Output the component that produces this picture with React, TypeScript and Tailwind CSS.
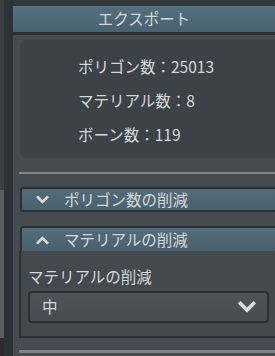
import React from "react";

const Chevron = ({ up = false, className = "" }: { up?: boolean; className?: string }) => (
  <svg viewBox="0 0 14 10" className={className} fill="none">
    <path
      d={up ? "M2 8 L7 3 L12 8" : "M2 2 L7 7 L12 2"}
      stroke="#d6dadc"
      strokeWidth="2.8"
      strokeLinecap="square"
      strokeLinejoin="miter"
    />
  </svg>
);

export default function App() {
  return (
    <div
      className="w-[275px] h-[356px] flex overflow-hidden text-[#d5d8da]"
      style={{ fontFamily: "'Noto Sans CJK JP', 'Noto Sans', sans-serif" }}
    >
      <div className="w-[4px] flex flex-col">
        <div className="h-[190px] bg-[#393e42]" />
        <div className="h-[148px] bg-[#5b5e61]" />
        <div className="flex-1 bg-[#2e2c32]" />
      </div>
      <div className="w-[9px] bg-[#2d3236]" />
      <div className="flex-1 bg-[#454b50] flex flex-col">
        <div className="h-[6px] bg-[#33383c]" />
        <div className="h-[26px] bg-gradient-to-b from-[#55707f] to-[#4a6170] flex items-center justify-center text-[15.5px] leading-none">
          エクスポート
        </div>
        <div className="h-[3px] bg-[#2c3135]" />
        <div className="pl-[7px] pt-[5px] flex flex-col">
          <div className="h-[118px] rounded-l-[7px] bg-[#3c4247] pl-[58px] pt-[10px] flex flex-col text-[15.5px]">
            <div className="h-[34px] flex items-center">ポリゴン数：25013</div>
            <div className="h-[34px] flex items-center">マテリアル数：8</div>
            <div className="h-[34px] flex items-center">ボーン数：119</div>
          </div>
          <div className="mt-[14px] -ml-[1px] h-[2px] bg-[#7f8487]" />
          <div className="mt-[13px] h-[25px] rounded-l-[3px] border-2 border-r-0 border-[#2b3034] bg-gradient-to-b from-[#546c7a] to-[#4a606e] flex items-center text-[15.5px]">
            <Chevron className="w-[13px] h-[10px] ml-[14px]" />
            <span className="ml-[15px] leading-none">ポリゴン数の削減</span>
          </div>
          <div className="mt-[14px] h-[25px] rounded-tl-[3px] border-2 border-r-0 border-b-0 border-[#2b3034] bg-gradient-to-b from-[#546c7a] to-[#4a606e] flex items-center text-[15.5px]">
            <Chevron up className="w-[13px] h-[10px] ml-[14px]" />
            <span className="ml-[15px] leading-none">マテリアルの削減</span>
          </div>
          <div className="-ml-[1px] h-[87px] border-l-2 border-b-2 border-[#2b3034] bg-[#43494e] flex flex-col pl-[7px] pr-[5px]">
            <div className="h-[40px] pt-[11px] flex items-center text-[15.5px] leading-none">マテリアルの削減</div>
            <div className="h-[32px] mr-[1px] rounded-[4px] border-2 border-[#2b3034] bg-gradient-to-b from-[#4d5358] to-[#464c51] flex items-center justify-between pl-[12px] pr-[10px] text-[15.5px]">
              <span className="leading-none">中</span>
              <Chevron className="w-[20px] h-[13px]" />
            </div>
          </div>
          <div className="mt-[12px] -ml-[1px] h-[3px] bg-[#7f8487]" />
        </div>
      </div>
    </div>
  );
}
